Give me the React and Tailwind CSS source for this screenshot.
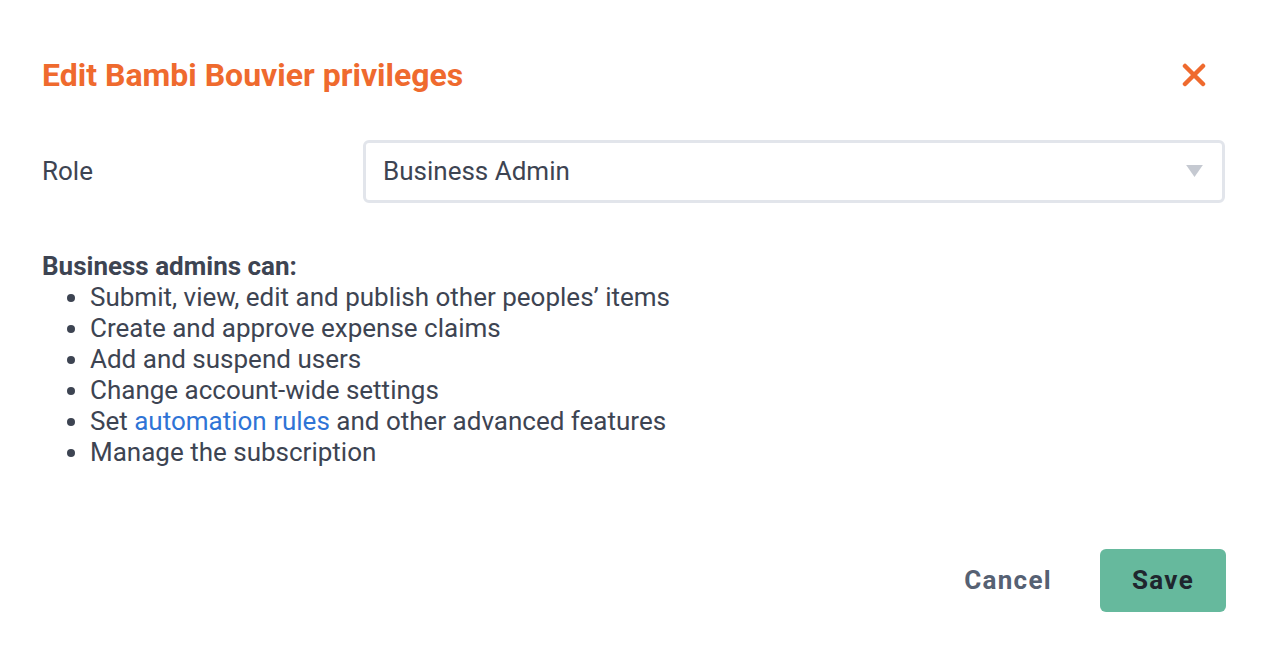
import React, { useState } from 'react'

const perms = [
    'Submit, view, edit and publish other peoples\u2019 items',
    'Create and approve expense claims',
    'Add and suspend users',
    'Change account-wide settings',
    'AUTOMATION',
    'Manage the subscription',
]

export default function App() {
    const [role, setRole] = useState('Business Admin')
    return (
        <div className="w-[1270px] h-[654px] bg-white text-[#3d4452] font-['Roboto',sans-serif] px-[42px] pt-[55px] flex flex-col">
            <div className="flex items-center justify-between h-[40px]">
                <h2 className="text-[32px] font-bold text-[#ef6a2e] leading-none">Edit Bambi Bouvier privileges</h2>
                <button className="w-[40px] h-[40px] flex items-center justify-center mr-[14px]">
                    <svg width="24" height="24" viewBox="0 0 24 24">
                        <path d="M3 3 L21 21 M21 3 L3 21" stroke="#ef6a2e" strokeWidth="4.5" strokeLinecap="round" />
                    </svg>
                </button>
            </div>

            <div className="flex items-center mt-[45px]">
                <label className="w-[321px] text-[26px]">Role</label>
                <div className="relative flex-1 mr-[3px]">
                    <select
                        value={role}
                        onChange={(e) => setRole(e.target.value)}
                        className="appearance-none w-full h-[63px] border-[3px] border-[#e2e5eb] rounded-[6px] pl-[17px] text-[26px] text-[#3d4452] bg-white outline-none"
                    >
                        <option>Business Admin</option>
                        <option>Member</option>
                    </select>
                    <svg className="absolute right-[22px] top-[25px] pointer-events-none" width="17" height="13" viewBox="0 0 18 14">
                        <path d="M0 0 H18 L9 13 Z" fill="#c5c9d1" />
                    </svg>
                </div>
            </div>

            <div className="mt-[48px] text-[26px] leading-[31px]">
                <p className="font-bold">Business admins can:</p>
                <ul className="list-disc pl-[48px]">
                    {perms.map((p) => (
                        <li key={p}>
                            {p === 'AUTOMATION' ? (
                                <>Set <a href="#" className="text-[#2f74d6]">automation rules</a> and other advanced features</>
                            ) : p}
                        </li>
                    ))}
                </ul>
            </div>

            <div className="flex justify-end items-center mt-auto mb-[42px] mr-[2px] gap-[48px]">
                <button className="text-[26px] font-bold tracking-[0.05em] text-[#566173]">Cancel</button>
                <button className="w-[126px] h-[63px] rounded-[6px] bg-[#66b99d] text-[26px] font-bold tracking-[0.05em] text-[#1f262e]">Save</button>
            </div>
        </div>
    )
}
